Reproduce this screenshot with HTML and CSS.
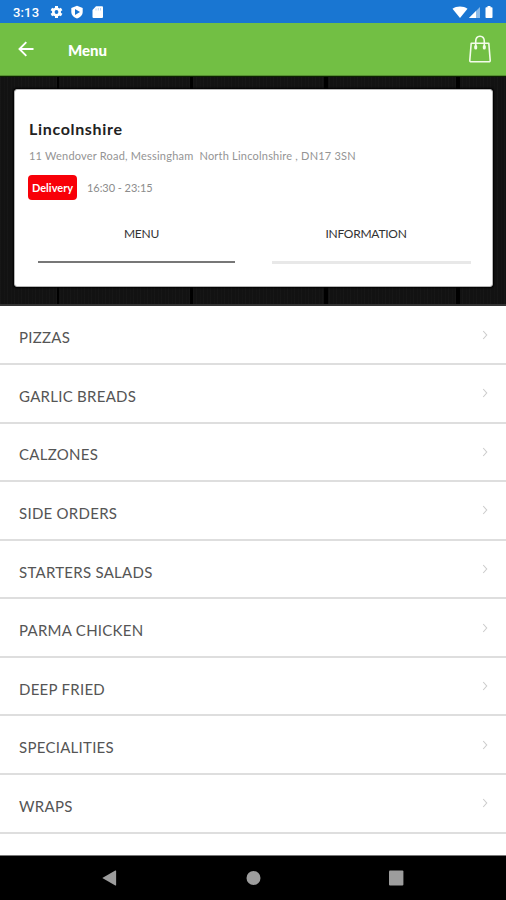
FILE: index.html
```html
<!DOCTYPE html>
<html lang="en">
<head>
<meta charset="utf-8">
<title>Menu</title>
<link rel="stylesheet" href="styles.css">
</head>
<body>
<div class="screen">
  <div class="status">
    <span class="clock">3:13</span>
    <svg class="status-left" width="56" height="14" viewBox="0 0 56 14">
      <g fill="#fff">
        <circle cx="6.500" cy="7" r="4.500"/>
        <path d="M5 1h3v12H5zM.6 5.300 2.100 2.700 12.400 8.700 10.900 11.300zM10.900 2.700 12.400 5.300 2.100 11.300.6 8.700z"/>
        <path d="M27 .8 32.700 2.900v4c0 3-2.500 5.400-5.700 6.600-3.200-1.200-5.700-3.600-5.700-6.600v-4z"/>
        <path d="M46 1.200h6q1 0 1 1v9.800q0 1-1 1h-8.500q-1 0-1-1V5z"/>
      </g>
      <circle cx="6.500" cy="7" r="1.900" fill="#1976d2"/>
      <path d="M25 4v6l5-3z" fill="#1976d2"/>
      <path d="M46 3.500v2M48.300 3v2.500M50.500 3v2.500" stroke="#a9cdf0" stroke-width=".8"/>
    </svg>
    <svg class="status-right" width="44" height="14" viewBox="0 0 44 14">
      <path d="M.5 3.800C4.600.6 11.400.6 15.500 3.800L8 13z" fill="#fff"/>
      <path d="M28 2v11H17z" fill="#8dbbe8"/>
      <path d="M24 6v7h-7z" fill="#fff"/>
      <path d="M35.500 1h3v1.200h1.200q.8 0 .8.800v9.200q0 .8-.8.800h-5.400q-.8 0-.8-.8V3q0-.8.800-.8h1.200z" fill="#fff"/>
    </svg>
  </div>
  <header class="bar">
    <svg class="back" width="16" height="16" viewBox="0 0 16 16" fill="none" stroke="#fff" stroke-width="1.900"><path d="M15.500 8H2M8.300 1.200 1.500 8l6.800 6.800"/></svg>
    <h1 class="title">Menu</h1>
    <svg class="bag" width="24" height="28" viewBox="0 0 24 28" fill="none" stroke="#f3fbea" stroke-width="1.600" stroke-linejoin="round" stroke-linecap="round">
      <path d="M3.200 8.300h17.600l1.400 17q.1 1.500-1.400 1.500H3.200q-1.500 0-1.400-1.500zM7.700 13V6.500C7.700 3 9.300 1.200 12 1.200s4.300 1.800 4.300 5.300V13"/>
      <path d="M7.700 11.500v1.500M16.300 11.500v1.500" stroke-width="3"/>
    </svg>
  </header>
  <section class="hero">
    <div class="card">
      <h2 class="name">Lincolnshire</h2>
      <p class="address">11 Wendover Road, Messingham&nbsp; North Lincolnshire , DN17 3SN</p>
      <div class="hours"><span class="badge">Delivery</span><span class="time">16:30 - 23:15</span></div>
      <nav class="tabs">
        <div class="tab active">MENU</div>
        <div class="tab info">INFORMATION</div>
      </nav>
    </div>
  </section>
  <main class="list">
    <div class="row"><span>PIZZAS</span><svg class="chev" width="6" height="10" viewBox="0 0 6 10"><path d="M1.200 1 4.700 5 1.200 9"/></svg></div>
    <div class="row"><span>GARLIC BREADS</span><svg class="chev" width="6" height="10" viewBox="0 0 6 10"><path d="M1.200 1 4.700 5 1.200 9"/></svg></div>
    <div class="row"><span>CALZONES</span><svg class="chev" width="6" height="10" viewBox="0 0 6 10"><path d="M1.200 1 4.700 5 1.200 9"/></svg></div>
    <div class="row"><span>SIDE ORDERS</span><svg class="chev" width="6" height="10" viewBox="0 0 6 10"><path d="M1.200 1 4.700 5 1.200 9"/></svg></div>
    <div class="row"><span>STARTERS SALADS</span><svg class="chev" width="6" height="10" viewBox="0 0 6 10"><path d="M1.200 1 4.700 5 1.200 9"/></svg></div>
    <div class="row"><span>PARMA CHICKEN</span><svg class="chev" width="6" height="10" viewBox="0 0 6 10"><path d="M1.200 1 4.700 5 1.200 9"/></svg></div>
    <div class="row"><span>DEEP FRIED</span><svg class="chev" width="6" height="10" viewBox="0 0 6 10"><path d="M1.200 1 4.700 5 1.200 9"/></svg></div>
    <div class="row"><span>SPECIALITIES</span><svg class="chev" width="6" height="10" viewBox="0 0 6 10"><path d="M1.200 1 4.700 5 1.200 9"/></svg></div>
    <div class="row"><span>WRAPS</span><svg class="chev" width="6" height="10" viewBox="0 0 6 10"><path d="M1.200 1 4.700 5 1.200 9"/></svg></div>
  </main>
  <footer class="nav">
    <svg width="16" height="18" viewBox="0 0 16 18"><path d="M.3 9 13.300 1.500q.8-.3.800.5v14q0 .8-.8.500z"/></svg>
    <svg width="16" height="18" viewBox="0 0 16 18"><circle cx="8.500" cy="9" r="7"/></svg>
    <svg width="16" height="18" viewBox="0 0 16 18"><rect x="1" y="1.500" width="14.400" height="15" rx="1"/></svg>
  </footer>
</div>
</body>
</html>
```
FILE: styles.css
```css
* { box-sizing: border-box; }
body { margin: 0; background: #fff; font-family: Lato, "Liberation Sans", sans-serif; }
h1, h2, p { margin: 0; }
svg { display: block; flex: none; }
.screen { width: 506px; height: 900px; display: flex; flex-direction: column; overflow: hidden; }
.status { height: 23px; flex: none; background: #1976d2; display: flex; align-items: center; padding: 1px 10px 0 13px; }
.clock { width: 37px; padding-top: 1px; font: 500 13px/20px Roboto, sans-serif; color: #fff; letter-spacing: .15px; }
.status-right { margin-left: auto; }
.bar { height: 53px; flex: none; background: #72bf44; display: flex; align-items: center; padding: 0 14px 0 18px; border-bottom: 1px solid #568f31; }
.title { margin-left: 34px; padding-top: 1px; font-size: 15px; line-height: 20px; font-weight: 900; color: #fff; }
.bag { margin-left: auto; }
.hero {
  height: 230px; flex: none; padding: 12px 13px 0 14px; border-top: 1px solid #0c2400; border-bottom: 2px solid #333;
  background:
    linear-gradient(90deg, transparent 57px, #000 57px 59px, transparent 59px 190px, #000 190px 193px, transparent 193px 324px, #000 324px 328px, transparent 328px 456px, #000 456px 460px, transparent 460px),
    repeating-linear-gradient(90deg, rgba(255,255,255,.02) 0 1px, transparent 1px 4px, rgba(255,255,255,.012) 4px 5px, transparent 5px 7px),
    #121212;
}
.card { height: 198px; background: #fff; border: 1px solid #b5b5b5; border-radius: 3px; padding: 28px 21px 0 14px; box-shadow: 0 0 2px 1px #000; }
.name { font-size: 16px; line-height: 22px; font-weight: 700; color: #222; letter-spacing: .67px; }
.address { margin-top: 7px; font-size: 11px; line-height: 18px; color: #949494; letter-spacing: .21px; white-space: nowrap; }
.hours { display: flex; align-items: center; margin-top: 9px; height: 26px; }
.badge { width: 49px; height: 25px; margin-left: -1px; border-radius: 4px; background: #f80008; color: #fff; font-size: 11px; line-height: 25px; font-weight: 700; text-align: center; }
.time { margin-left: 10px; padding-top: 1px; font-size: 11px; color: #8c8c8c; letter-spacing: -.05px; }
.tabs { display: grid; grid-template-columns: 197px 199px; gap: 37px; margin: 24px 0 0 9px; }
.tab { height: 40px; font-size: 12px; line-height: 20px; color: #333; text-align: center; border-bottom: 3px solid #e8e8e8; padding-left: 10px; letter-spacing: -.25px; }
.active { border-bottom: 2px solid #777; height: 39px; }
.info { padding-left: 0; padding-right: 11px; }
.list { flex: 1; min-height: 0; overflow: hidden; background: #fff; }
.row { height: 58.580px; display: flex; justify-content: space-between; align-items: center; padding: 5px 18px 0 19px; border-bottom: 2px solid #dedede; font-size: 15px; color: #555; letter-spacing: .27px; }
.list .row:first-child { height: 59px; }
.chev { margin-bottom: 5px; fill: none; stroke: #ccc; stroke-width: 1.100; }
.nav { height: 45px; flex: none; background: #000; border-top: 1px solid #777; display: flex; justify-content: space-between; padding: 13px 102px 0; fill: #9d9d9d; }
```
